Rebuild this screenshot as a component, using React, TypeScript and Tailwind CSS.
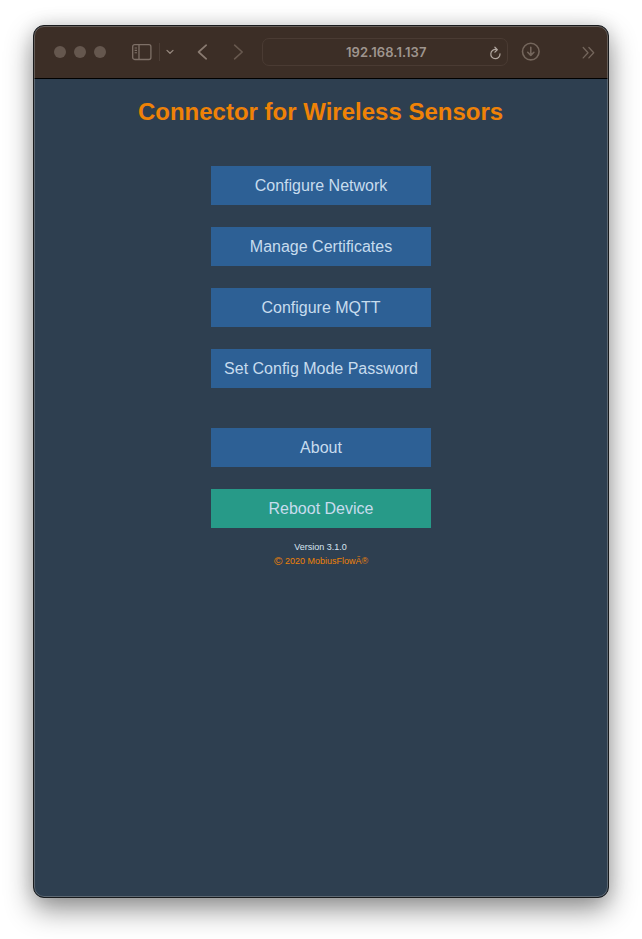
import React from "react";

const ARIAL = "font-['Liberation_Sans',Arial,sans-serif]";

function MenuButton({ label, className = "bg-[#2d6095]" }: { label: string; className?: string }) {
  return (
    <button type="button" className={`h-[39px] w-[220px] whitespace-nowrap text-[16px] leading-[39px] text-[#c7dcee] ${className}`}>
      {label}
    </button>
  );
}

function Toolbar() {
  return (
    <header className="flex h-[53px] items-center border-b border-black bg-[#3c2e26] text-[#7e7067]">
      <div className="ml-5 flex gap-2">
        <span className="size-3 rounded-full bg-[#65574e]" />
        <span className="size-3 rounded-full bg-[#65574e]" />
        <span className="size-3 rounded-full bg-[#65574e]" />
      </div>
      <svg className="ml-[26px] shrink-0" width="20" height="17" viewBox="0 0 20 17" fill="none" stroke="currentColor">
        <rect x="0.7" y="0.7" width="18.2" height="14.8" rx="2" strokeWidth="1.3" />
        <path d="M7 1v14.5" strokeWidth="1.3" />
        <path d="M2.6 4h2.4M2.6 6.4h2.4M2.6 8.8h2.4" strokeWidth="1.1" />
      </svg>
      <span className="ml-[7px] h-[18px] w-px bg-[#4c3e36]" />
      <svg className="ml-[6px] shrink-0" width="8" height="6" viewBox="0 0 8 6" fill="none" stroke="#95877d" strokeWidth="1.3" strokeLinecap="round" strokeLinejoin="round">
        <path d="M1 1.4L4 4.3L7 1.4" />
      </svg>
      <svg className="ml-[23px] shrink-0" width="12" height="17" viewBox="0 0 12 17" fill="none" stroke="#8a7b71" strokeWidth="1.7" strokeLinecap="round" strokeLinejoin="round">
        <path d="M9.2 1.2L1.6 8L9.2 14.8" />
      </svg>
      <svg className="ml-[24px] shrink-0" width="12" height="17" viewBox="0 0 12 17" fill="none" stroke="#68594f" strokeWidth="1.6" strokeLinecap="round" strokeLinejoin="round">
        <path d="M1.6 1.2L9.2 8L1.6 14.8" />
      </svg>
      <div className="ml-[17px] flex h-7 w-[246px] shrink-0 items-center rounded-[7px] border border-[#4a3b33]">
        <span className="ml-[83px] w-[82px] whitespace-nowrap font-['Inter',sans-serif] text-[13px] font-semibold leading-4 tracking-[0.08px] text-[#9f958e]">192.168.1.137</span>
        <svg className="ml-[61px] mt-px shrink-0" width="13" height="14" viewBox="0 0 13 14" fill="none" stroke="#b0a69f" strokeWidth="1.25" strokeLinecap="round" strokeLinejoin="round">
          <path d="M7.4 3.6A4.6 4.6 0 1 0 11 7.9" />
          <path d="M5.9 1.2L8.3 3.7L5.9 6.1" />
        </svg>
      </div>
      <svg className="ml-[13px] shrink-0" width="20" height="20" viewBox="0 0 20 20" fill="none" stroke="#74665c" strokeWidth="1.6" strokeLinecap="round" strokeLinejoin="round">
        <circle cx="9.8" cy="9.6" r="8.3" />
        <path d="M9.8 5.4v8M6.7 10.3L9.8 13.4L12.9 10.3" />
      </svg>
      <svg className="ml-[41px] shrink-0" width="13" height="13" viewBox="0 0 13 13" fill="none" stroke="#74665c" strokeWidth="1.3" strokeLinecap="round" strokeLinejoin="round">
        <path d="M1.2 1.5L6 6.7L1.2 11.9M6.9 1.5L11.7 6.7L6.9 11.9" />
      </svg>
    </header>
  );
}

export default function App() {
  return (
    <div className={`h-[939px] w-[642px] overflow-hidden bg-white pl-[33px] pt-[25px] ${ARIAL}`}>
      <div className="h-[873px] w-[576px] rounded-[11px] border border-[#191b1d] bg-[#2e3f50] shadow-[0_12px_28px_rgba(0,0,0,0.42),0_0_18px_rgba(0,0,0,0.12)]">
        <div className="relative flex h-full flex-col overflow-hidden rounded-[10px]">
          <Toolbar />
          <main className="flex flex-col items-center">
            <h1 className="mt-[19px] whitespace-nowrap pr-px text-[24px] font-bold leading-[28px] text-[#ef8207]">Connector for Wireless Sensors</h1>
            <nav className="mt-[40px] flex flex-col gap-[22px]">
              <MenuButton label="Configure Network" />
              <MenuButton label="Manage Certificates" />
              <MenuButton label="Configure MQTT" />
              <MenuButton label="Set Config Mode Password" />
              <MenuButton label="About" className="mt-[18px] bg-[#2d6095]" />
              <MenuButton label="Reboot Device" className="bg-[#279a88]" />
            </nav>
            <p className="mt-[12px] pr-px text-[9px] leading-[14px] text-[#d8e5f0]">Version 3.1.0</p>
            <p className="flex h-[14px] items-center gap-[2.5px] text-[9px] leading-[14px] text-[#ef8207]">
              <span className="text-[11.5px]">©</span>
              <span>2020 MobiusFlowÃ®</span>
            </p>
          </main>
          <div className="pointer-events-none absolute inset-0 rounded-[10px] border border-[#a4a8a8]/40" />
        </div>
      </div>
    </div>
  );
}
